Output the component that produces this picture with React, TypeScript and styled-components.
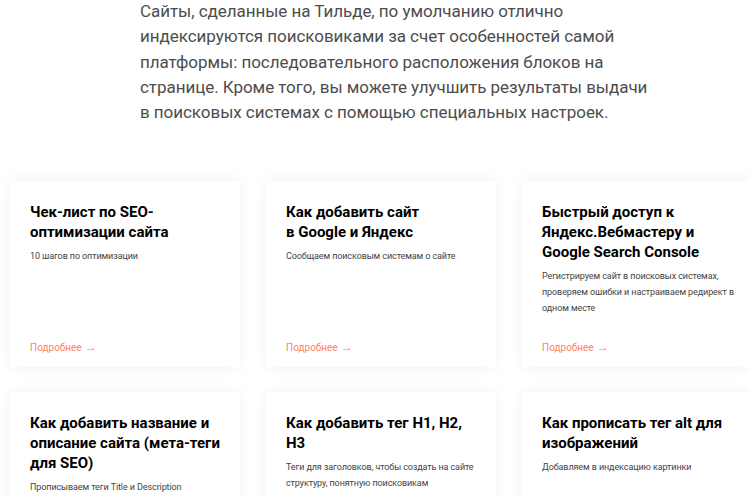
import React from 'react';
import styled, { createGlobalStyle } from 'styled-components';

const GlobalStyle = createGlobalStyle`
  html, body {
    margin: 0;
    padding: 0;
    background: #fff;
    overflow: hidden;
  }
  body {
    font-family: Roboto, "Noto Sans", "Liberation Sans", sans-serif;
  }
`;

const Page = styled.main`
  width: 750px;
  height: 497px;
  overflow: hidden;
  box-sizing: border-box;
`;

const Lead = styled.p`
  margin: -1px 0 0 140px;
  font-size: 17px;
  line-height: 25.3px;
  letter-spacing: -0.05px;
  color: #4d4d4d;
  font-weight: 400;
  white-space: nowrap;
`;

const Grid = styled.section`
  display: grid;
  grid-template-columns: repeat(3, 230px);
  column-gap: 26px;
  row-gap: 25px;
  margin: 56px 0 0 10px;
`;

const Card = styled.article`
  height: 186px;
  box-sizing: border-box;
  padding: 21px 20px 11px;
  background: #fff;
  box-shadow: 0 0 14px rgba(0, 0, 0, 0.06);
  display: flex;
  flex-direction: column;
`;

const Title = styled.h3`
  margin: 0;
  font-size: 15px;
  line-height: 20px;
  font-weight: 700;
  color: #000;
  white-space: nowrap;
`;

const Note = styled.p`
  margin: 6px 0 0;
  font-size: 9px;
  line-height: 16px;
  letter-spacing: -0.1px;
  color: #444;
  white-space: nowrap;
`;

const More = styled.a`
  margin-top: auto;
  font-size: 10px;
  line-height: 16px;
  color: #ff8562;
  text-decoration: none;
`;

const Arrow = styled.span`
  font-size: 12px;
  margin-left: 3px;
`;

type Item = { title: string[]; note: string[] };

const items: Item[] = [
  { title: ['Чек-лист по SEO-', 'оптимизации сайта'], note: ['10 шагов по оптимизации'] },
  { title: ['Как добавить сайт', 'в Google и Яндекс'], note: ['Сообщаем поисковым системам о сайте'] },
  {
    title: ['Быстрый доступ к', 'Яндекс.Вебмастеру и', 'Google Search Console'],
    note: ['Регистрируем сайт в поисковых системах,', 'проверяем ошибки и настраиваем редирект в', 'одном месте'],
  },
  {
    title: ['Как добавить название и', 'описание сайта (мета-теги', 'для SEO)'],
    note: ['Прописываем теги Title и Description'],
  },
  {
    title: ['Как добавить тег H1, H2,', 'H3'],
    note: ['Теги для заголовков, чтобы создать на сайте', 'структуру, понятную поисковикам'],
  },
  { title: ['Как прописать тег alt для', 'изображений'], note: ['Добавляем в индексацию картинки'] },
];

const lines = (parts: string[]) =>
  parts.map((p, i) => (
    <React.Fragment key={i}>
      {i > 0 && <br />}
      {p}
    </React.Fragment>
  ));

const App = () => (
  <>
    <GlobalStyle />
    <Page>
      <Lead>
        Сайты, сделанные на Тильде, по умолчанию отлично<br />
        индексируются поисковиками за счет особенностей самой<br />
        платформы: последовательного расположения блоков на<br />
        странице. Кроме того, вы можете улучшить результаты выдачи<br />
        в поисковых системах с помощью специальных настроек.
      </Lead>
      <Grid>
        {items.map((item, i) => (
          <Card key={i}>
            <Title>{lines(item.title)}</Title>
            <Note>{lines(item.note)}</Note>
            <More href="#">
              Подробнее<Arrow>→</Arrow>
            </More>
          </Card>
        ))}
      </Grid>
    </Page>
  </>
);

export default App;
